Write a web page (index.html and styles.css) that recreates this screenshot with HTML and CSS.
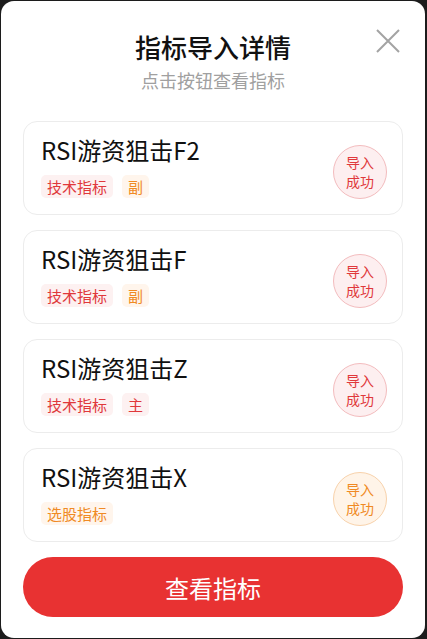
FILE: index.html
```html
<!DOCTYPE html>
<html lang="zh-CN">
<head>
    <meta charset="UTF-8">
    <meta name="viewport" content="width=device-width, initial-scale=1.0">
    <title>指标导入详情</title>
    <link rel="stylesheet" href="styles.css">
</head>
<body>
    <div class="modal">
        <div class="header">
            <div class="title">指标导入详情</div>
            <div class="subtitle">点击按钮查看指标</div>
            <svg class="close" width="24" height="24" viewBox="0 0 24 24">
                <path d="M1 1L23 23M23 1L1 23" stroke="#a3a3a3" stroke-width="2" fill="none"/>
            </svg>
        </div>
        <div class="list">
            <div class="card">
                <div class="info">
                    <div class="name">RSI游资狙击F2</div>
                    <div class="tags">
                        <span class="tag red">技术指标</span>
                        <span class="tag orange">副</span>
                    </div>
                </div>
                <div class="badge red">导入<br>成功</div>
            </div>
            <div class="card">
                <div class="info">
                    <div class="name">RSI游资狙击F</div>
                    <div class="tags">
                        <span class="tag red">技术指标</span>
                        <span class="tag orange">副</span>
                    </div>
                </div>
                <div class="badge red">导入<br>成功</div>
            </div>
            <div class="card">
                <div class="info">
                    <div class="name">RSI游资狙击Z</div>
                    <div class="tags">
                        <span class="tag red">技术指标</span>
                        <span class="tag red">主</span>
                    </div>
                </div>
                <div class="badge red">导入<br>成功</div>
            </div>
            <div class="card">
                <div class="info">
                    <div class="name">RSI游资狙击X</div>
                    <div class="tags">
                        <span class="tag orange">选股指标</span>
                    </div>
                </div>
                <div class="badge orange">导入<br>成功</div>
            </div>
        </div>
        <button class="view-btn">查看指标</button>
    </div>
</body>
</html>
```

FILE: styles.css
```css
body {
    margin: 0;
    padding: 0;
    background-color: #1c1c1c;
    font-family: "Noto Sans CJK SC", "Noto Sans", sans-serif;
    overflow: hidden;
}
.modal {
    box-sizing: border-box;
    width: 424px;
    height: 637px;
    margin: 1px 0 0 1px;
    background: #fff;
    border-radius: 13px;
    padding: 0 22px;
    display: flex;
    flex-direction: column;
}
.header {
    position: relative;
    text-align: center;
    padding-top: 29px;
    height: 120px;
    box-sizing: border-box;
}
.title {
    font-size: 26px;
    line-height: 34px;
    font-weight: 500;
    color: #111;
}
.subtitle {
    font-size: 18px;
    line-height: 24px;
    margin-top: 4px;
    color: #a0a0a0;
}
.close {
    position: absolute;
    top: 28px;
    right: 3px;
}
.list {
    display: flex;
    flex-direction: column;
    gap: 15px;
}
.card {
    height: 94px;
    box-sizing: border-box;
    border: 1px solid #ececec;
    border-radius: 14px;
    padding: 0 15px 0 17px;
    display: flex;
    align-items: center;
    justify-content: space-between;
}
.info {
    margin-bottom: 4px;
}
.name {
    font-size: 24px;
    line-height: 30px;
    color: #111;
}
.tags {
    display: flex;
    gap: 9px;
    margin-top: 10px;
}
.tag {
    font-size: 15px;
    line-height: 23px;
    padding: 0 6px;
    border-radius: 5px;
}
.tag.red { color: #e0383b; background: #fdf1f1; }
.tag.orange { color: #f08a24; background: #fff5ec; }
.badge {
    width: 54px;
    height: 54px;
    box-sizing: border-box;
    border-radius: 50%;
    font-size: 14px;
    line-height: 19px;
    display: flex;
    align-items: center;
    justify-content: center;
    text-align: center;
    margin-top: 8px;
}
.badge.red { color: #e0383b; background: #fdeff0; border: 1px solid #f3bcbe; }
.badge.orange { color: #f08a24; background: #fff4e8; border: 1px solid #f8d2ab; }
.view-btn {
    margin-top: 15px;
    height: 60px;
    border: none;
    border-radius: 30px;
    background: #e83232;
    color: #fff;
    font-family: inherit;
    font-size: 24px;
    cursor: pointer;
}
```
